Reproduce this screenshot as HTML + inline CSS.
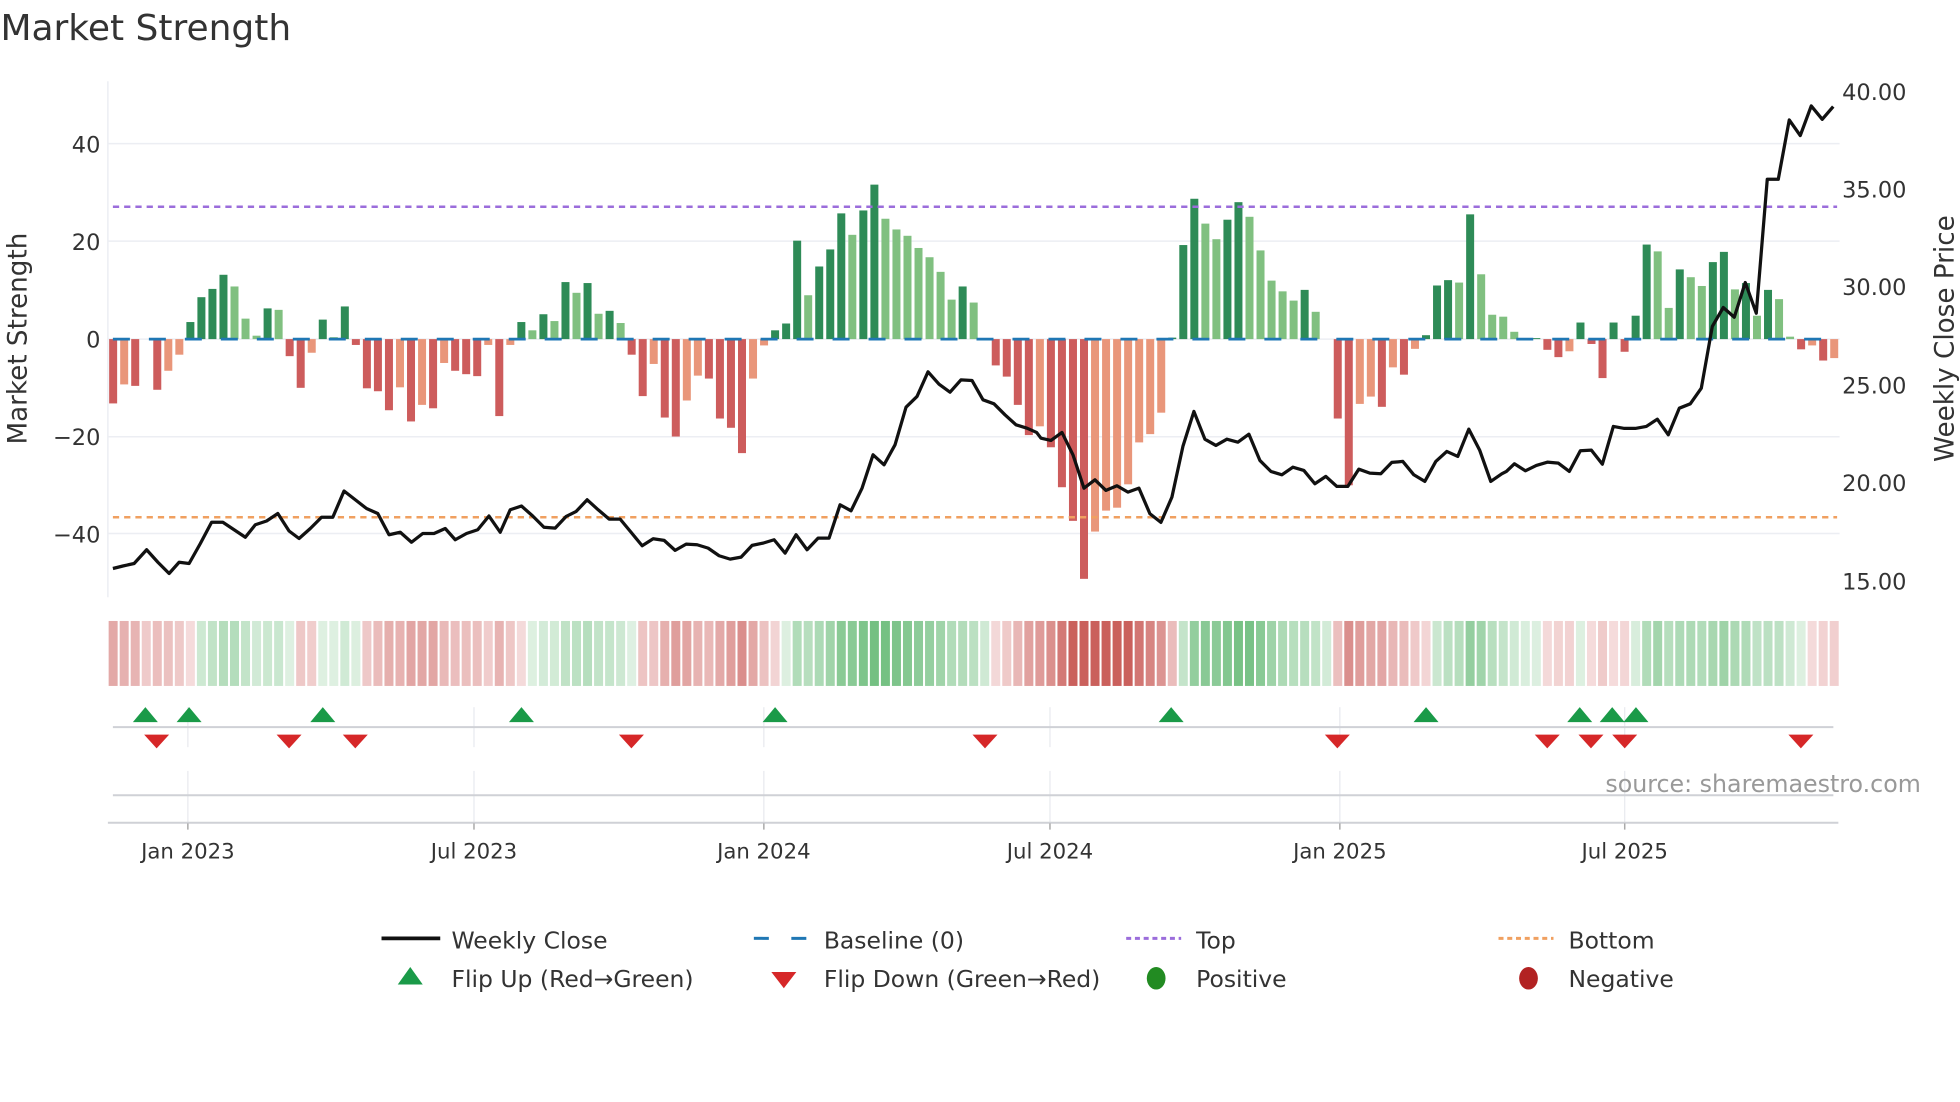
<!DOCTYPE html>
<html><head><meta charset="utf-8">
<style>
html,body{margin:0;padding:0;background:#fff;}
svg{display:block;font-family:"DejaVu Sans","Liberation Sans",sans-serif;}
</style></head>
<body>
<svg id="s" width="1960" height="1102" viewBox="0 0 1568 882" xmlns="http://www.w3.org/2000/svg">
<rect width="1568" height="882" fill="#fff"/>
<text x="0" y="32" font-size="28.8" fill="#333">Market Strength</text>
<g id="grid" stroke="#eceef3" stroke-width="1.2">
<line x1="86" y1="115" x2="1472" y2="115"/>
<line x1="86" y1="193" x2="1472" y2="193"/>
<line x1="86" y1="271.4" x2="1472" y2="271.4"/>
<line x1="86" y1="349.6" x2="1472" y2="349.6"/>
<line x1="86" y1="427" x2="1472" y2="427"/>
<line x1="86" y1="65" x2="86" y2="478"/>
</g>
<g font-size="18" fill="#333" text-anchor="end">
<text x="80" y="122">40</text>
<text x="80" y="200">20</text>
<text x="80" y="278">0</text>
<text x="80" y="356">−20</text>
<text x="80" y="434">−40</text>
</g>
<g font-size="18" fill="#333">
<text x="1474" y="80">40.00</text>
<text x="1474" y="158">35.00</text>
<text x="1474" y="236">30.00</text>
<text x="1474" y="315">25.00</text>
<text x="1474" y="393">20.00</text>
<text x="1474" y="472">15.00</text>
</g>
<text transform="translate(21,271) rotate(-90)" font-size="21" fill="#333" text-anchor="middle">Market Strength</text>
<text transform="translate(1563,271) rotate(-90)" font-size="21" fill="#333" text-anchor="middle">Weekly Close Price</text>
<g id="bars"></g>
<line x1="90" y1="271.4" x2="1470" y2="271.4" stroke="#1f77b4" stroke-width="2.2" stroke-dasharray="13.6 15.2"/>
<line x1="90" y1="165.5" x2="1470" y2="165.5" stroke="#9b6ddb" stroke-width="2" stroke-dasharray="5 4"/>
<line x1="90" y1="414" x2="1470" y2="414" stroke="#f0a060" stroke-width="2" stroke-dasharray="5 4"/>
<polyline id="price" fill="none" stroke="#111" stroke-width="2.6" stroke-linejoin="round"/>
<g id="heat"></g>
<g stroke="#e8eaef" stroke-width="1">
<line x1="150" y1="566" x2="150" y2="598"/><line x1="379" y1="566" x2="379" y2="598"/><line x1="611" y1="566" x2="611" y2="598"/><line x1="840" y1="566" x2="840" y2="598"/><line x1="1072" y1="566" x2="1072" y2="598"/><line x1="1300" y1="566" x2="1300" y2="598"/>
<line x1="150" y1="617" x2="150" y2="658"/><line x1="379" y1="617" x2="379" y2="658"/><line x1="611" y1="617" x2="611" y2="658"/><line x1="840" y1="617" x2="840" y2="658"/><line x1="1072" y1="617" x2="1072" y2="658"/><line x1="1300" y1="617" x2="1300" y2="658"/>
</g>
<line x1="90" y1="582" x2="1467" y2="582" stroke="#cfd1d6" stroke-width="1.6"/>
<line x1="90" y1="636.5" x2="1467" y2="636.5" stroke="#cfd1d6" stroke-width="1.6"/>
<line x1="86" y1="658.5" x2="1471" y2="658.5" stroke="#cfd1d6" stroke-width="1.6"/>
<g stroke="#aaa" stroke-width="1.2">
<line x1="150" y1="659" x2="150" y2="664"/><line x1="379" y1="659" x2="379" y2="664"/><line x1="611" y1="659" x2="611" y2="664"/><line x1="840" y1="659" x2="840" y2="664"/><line x1="1072" y1="659" x2="1072" y2="664"/><line x1="1300" y1="659" x2="1300" y2="664"/>
</g>
<g id="marks"></g>
<text x="1537" y="634" font-size="19" fill="#999" text-anchor="end">source: sharemaestro.com</text>
<g font-size="17" fill="#333" text-anchor="middle">
<text x="150" y="687">Jan 2023</text>
<text x="379" y="687">Jul 2023</text>
<text x="611" y="687">Jan 2024</text>
<text x="840" y="687">Jul 2024</text>
<text x="1072" y="687">Jan 2025</text>
<text x="1300" y="687">Jul 2025</text>
</g>
<g font-size="18.8" fill="#333">
<line x1="305" y1="751" x2="352" y2="751" stroke="#111" stroke-width="3"/>
<text x="361" y="759">Weekly Close</text>
<line x1="603" y1="751" x2="647" y2="751" stroke="#1f77b4" stroke-width="2.4" stroke-dasharray="12 18"/>
<text x="659" y="759">Baseline (0)</text>
<line x1="901" y1="751" x2="945" y2="751" stroke="#9b6ddb" stroke-width="2.4" stroke-dasharray="4 3"/>
<text x="957" y="759">Top</text>
<line x1="1199" y1="751" x2="1243" y2="751" stroke="#f0a060" stroke-width="2.4" stroke-dasharray="4 3"/>
<text x="1255" y="759">Bottom</text>
<polygon points="328,774 338,788 318,788" fill="#1a9a48"/>
<text x="361" y="790">Flip Up (Red→Green)</text>
<polygon points="617,778 637,778 627,791" fill="#d62728"/>
<text x="659" y="790">Flip Down (Green→Red)</text>
<ellipse cx="925" cy="783" rx="7.5" ry="9" fill="#228b22"/>
<text x="957" y="790">Positive</text>
<ellipse cx="1223" cy="783" rx="7.5" ry="9" fill="#b22222"/>
<text x="1255" y="790">Negative</text>
</g>
</svg>
<script>
(function(){
var NS="http://www.w3.org/2000/svg";
function el(t,a,p){var e=document.createElementNS(NS,t);for(var k in a)e.setAttribute(k,a[k]);p.appendChild(e);return e;}
var v=[-13.2,-9.3,-9.6,0,-10.4,-6.5,-3.2,3.5,8.6,10.3,13.2,10.8,4.2,0.7,6.3,6.0,-3.5,-10,-2.8,4,0.4,6.7,-1.2,-10.1,-10.7,-14.6,-9.9,-16.9,-13.5,-14.2,-4.9,-6.5,-7.2,-7.6,-1.2,-15.8,-1.2,3.5,1.8,5.1,3.7,
11.7,9.5,11.5,5.2,5.8,3.3,-3.2,-11.7,-5.1,-16.1,-20,-12.6,-7.5,-8.1,-16.3,-18.2,-23.4,-8.1,-1.3,1.8,3.2,20.2,9,14.9,18.4,25.8,21.4,26.4,31.7,24.7,22.5,21.2,18.7,16.8,13.8,8.1,10.8,7.5,0,-5.4,-7.7,-13.5,-19.7,
-17.9,-22.2,-30.4,-37.3,-49.2,-39.5,-35.2,-34.6,-29.8,-21.2,-19.5,-15.1,0.3,19.3,28.8,23.7,20.5,24.5,28.1,25.1,18.2,12.0,9.8,7.9,10.1,5.6,0,-16.3,-30,-13.3,-11.8,-13.9,-5.8,-7.3,-2,0.8,11.0,12.1,11.6,25.6,13.3,5.0,4.6,
1.5,0,0.2,-2.2,-3.7,-2.5,3.4,-1,-8,3.4,-2.6,4.8,19.4,18,6.4,14.3,12.7,10.9,15.8,17.9,10.2,11.5,4.8,10.1,8.2,0.5,-2.1,-1.3,-4.4,-3.9];
var bars=document.getElementById('bars'),heat=document.getElementById('heat');
var Z=271.4,S=3.9,W=6.4,ema=0,DX=8.83;
function mix(a,b,t){return 'rgb('+[0,1,2].map(function(i){return Math.round(a[i]+(b[i]-a[i])*t);}).join(',')+')';}
for(var i=0;i<v.length;i++){
  var x=90.2+DX*i,val=v[i],prev=i>0?v[i-1]:0,c;
  if(val>=0)c=(val>=prev)?'#2e8b57':'#80c080';else c=(val<=prev)?'#cd5c5c':'#e9967a';
  if(Math.abs(val)>0.05){var h=Math.abs(val)*S;el('rect',{x:x-W/2,y:val>0?Z-h:Z,width:W,height:h,fill:c},bars);}
  ema=i==0?val:ema*0.45+val*0.55;
  var t=Math.min(1,Math.abs(ema)/40);
  var col=ema>=0?mix([224,241,227],[116,192,130],Math.min(1,t*1.5)):mix([245,220,220],[202,96,92],Math.min(1,t*1.25));
  el('rect',{x:x-3.6,y:497,width:7.2,height:52,fill:col},heat);
}
var P=[];
var A=[[90,455],[98,453],[107,451],[117,440],[126,450],[135,459],[143,450],[151,451],[160,435],[169,418],[178,418],[187,424],[196,430],[204,420],[213,417],[222,411],[231,425],[239,431],[248,423],[257,414],[266,414],[275,393],[284,400],[293,407],[302,411],[311,428],[320,426],[329,434],[338,427],[347,427],[356,423],[364,432],[373,427],[382,424],[391,413],[400,426],[408,408],[417,405],[426,413],[435,422]];
A.forEach(function(p){P.push(p);});
function seg(x0,y0,L){L.forEach(function(p){P.push([(x0+p[0]/3)/1.25,(y0+p[1]/3)/1.25]);});}
seg(555,160,[[0,1105],[33,1070],[63,1055],[96,1020],[129,1050],[162,1078],[195,1078],[228,1118],[261,1158],[294,1137],[327,1142],[360,1172],[393,1153],[426,1155],[459,1165],[492,1188],[525,1198],[558,1192],[591,1157],[624,1150],[657,1140],[690,1180],[723,1125],[756,1170],[789,1135],[822,1135],[855,1035],[888,1053],[921,985],[954,885],[987,915],[1020,855],[1053,742],[1086,710],[1119,636],[1152,673],[1185,697],[1218,660],[1251,662],[1284,720],[1317,732],[1350,765],[1383,795],[1416,805]]);
seg(1030,160,[[20,818],[33,835],[63,842],[96,818],[129,885],[162,985],[195,960],[228,992],[261,978],[294,997],[327,985],[360,1062],[393,1088],[426,1012],[459,860],[492,755],[525,838],[558,857],[591,838],[624,847],[657,823],[690,902],[723,935],[756,945],[789,922],[822,932],[855,972],[888,950],[921,980],[954,980],[987,928],[1020,940],[1053,942],[1086,908],[1119,905],[1152,945],[1185,965],[1218,905],[1251,875],[1284,890],[1317,808],[1350,872],[1383,965],[1416,942]]);
seg(1500,80,[[20,1175],[44,1152],[77,1173],[110,1157],[143,1147],[176,1150],[209,1175],[242,1113],[275,1111],[308,1153],[341,1040],[374,1046],[407,1046],[440,1040],[473,1018],[506,1065],[539,985],[572,972],[605,925],[638,740],[671,683],[704,712],[737,608],[770,700],[803,298],[836,298],[869,120],[902,167],[935,78],[968,118],[1001,80]]);
document.getElementById('price').setAttribute('points',P.map(function(p){return p[0].toFixed(1)+','+p[1].toFixed(1);}).join(' '));
var m=document.getElementById('marks');
[116,151,258,417,620,937,1141,1264,1290,1309].forEach(function(x){el('polygon',{points:(x)+',566 '+(x+10)+',578 '+(x-10)+',578',fill:'#1a9a48'},m);});
[125,231,284,505,788,1070,1238,1273,1300,1441].forEach(function(x){el('polygon',{points:(x-10)+',588 '+(x+10)+',588 '+x+',599',fill:'#d62728'},m);});
})();
</script>
</body></html>
